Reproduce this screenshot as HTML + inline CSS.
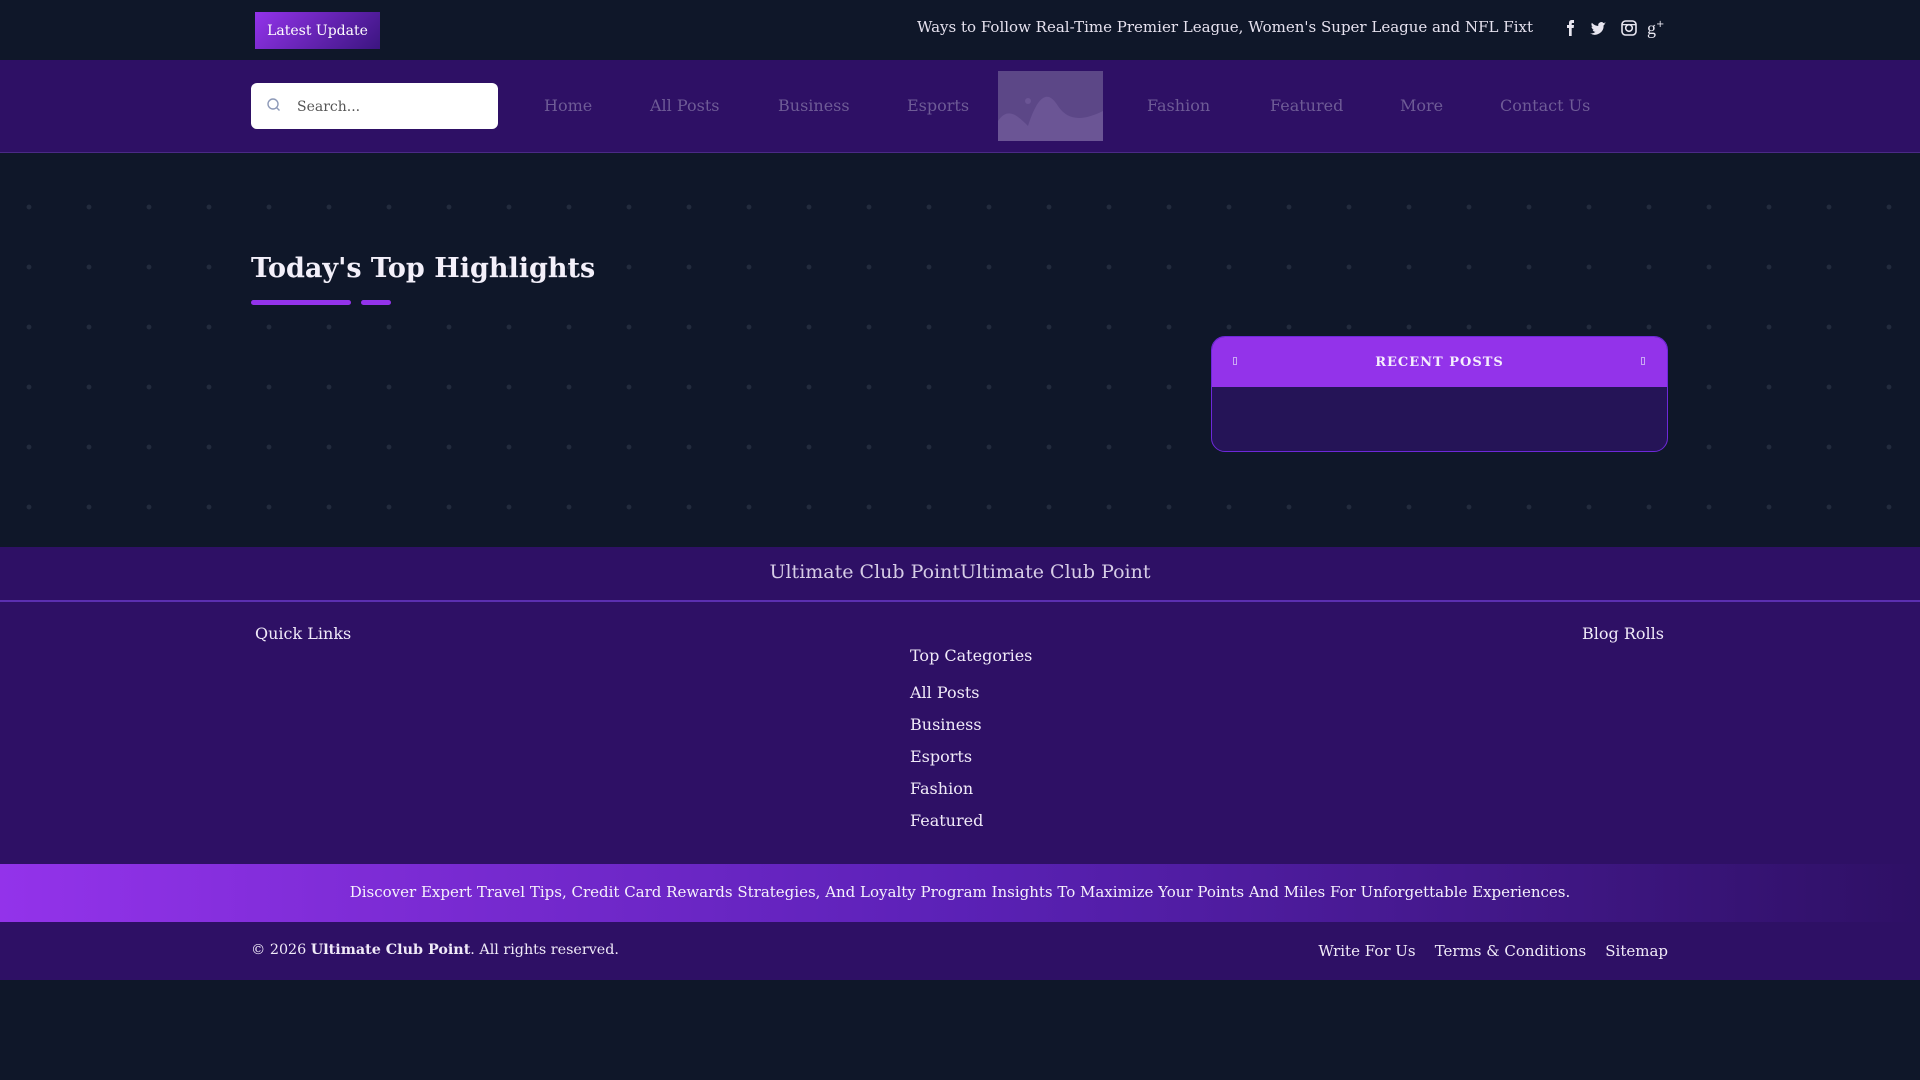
<!DOCTYPE html>
<html><head><meta charset="utf-8"><style>
*{margin:0;padding:0;box-sizing:border-box}
body{width:1920px;height:1080px;background:#0f1729;font-family:"DejaVu Serif","Liberation Serif",serif;color:#fff;position:relative;overflow:hidden}
.abs{position:absolute;white-space:nowrap}
.top{position:absolute;left:0;top:0;width:1920px;height:60px;background:#0f1729}
.btn{left:255px;top:12px;width:125px;height:37px;background:linear-gradient(135deg,#9333ea,#3b1580);font-size:14px;line-height:38px;text-align:center}
.nav{position:absolute;left:0;top:60px;width:1920px;height:93px;background:#2e1065;border-bottom:1px solid #4a2a85}
.search{left:251px;top:83px;width:247px;height:46px;background:#fff;border-radius:6px;color:#555;font-size:14px;line-height:48px;padding-left:46px}
.nv{top:96px;font-size:16px;color:#6e5b96}
.main{position:absolute;left:0;top:153px;width:1920px;height:394px;background-color:#0f1729;background-image:radial-gradient(circle,#222b3d 2.2px,transparent 2.6px);background-size:60px 60px;background-position:-1px 24px}
.foot{position:absolute;left:0;top:547px;width:1920px;height:433px;background:#2e1065}
.fl{font-size:16px;color:#f0eaf8}
</style></head><body>
<div class="top"></div>
<div class="abs btn">Latest Update</div>
<div class="abs" style="left:917px;top:18px;font-size:15px;color:#e5e1ee">Ways to Follow Real-Time Premier League, Women's Super League and NFL Fixt</div>
<svg class="abs" style="left:1560px;top:16px" width="110" height="24" viewBox="0 0 110 24" fill="#e8e6f0">
<path d="M9 20v-8h-2v-3h2V7c0-2 1-3 3-3h2v3h-1.5c-.6 0-.8.3-.8.9V9h2.3l-.3 3h-2v8z"/>
<path d="M46 7.5c-.6.3-1.2.4-1.8.5.7-.4 1.1-1 1.4-1.7-.6.4-1.3.6-2 .8a3.1 3.1 0 0 0-5.3 2.8c-2.6-.1-4.900-1.4-6.4-3.200-.9 1.500-.4 3.300 1 4.200-.5 0-1-.2-1.400-.4 0 1.500 1.100 2.800 2.500 3.100-.5.100-1 .2-1.400.1.4 1.300 1.600 2.200 2.900 2.200A6.300 6.300 0 0 1 30 17.300 8.800 8.800 0 0 0 43.600 9.400c.6-.5 1.100-1.100 1.500-1.700z"/>
<rect x="62" y="5" width="14" height="14" rx="3.5" fill="none" stroke="#e8e6f0" stroke-width="1.6"/><circle cx="69" cy="12" r="3.3" fill="none" stroke="#e8e6f0" stroke-width="1.6"/><rect x="62" y="8" width="14" height="1.3"/>
<text x="87" y="18" font-size="18" font-family="Liberation Serif">g</text><text x="96" y="11" font-size="10" font-family="DejaVu Sans">+</text>
</svg>
<div class="nav"></div>
<div class="abs search"><svg style="position:absolute;left:15px;top:14px" width="16" height="16" viewBox="0 0 16 16"><circle cx="7" cy="7" r="5" fill="none" stroke="#8e9ab8" stroke-width="1.4"/><path d="M10.5 10.5l3 3" stroke="#8e9ab8" stroke-width="1.4"/></svg>Search...</div>
<div class="abs nv" style="left:544px">Home</div>
<div class="abs nv" style="left:650px">All Posts</div>
<div class="abs nv" style="left:778px">Business</div>
<div class="abs nv" style="left:907px">Esports</div>
<svg class="abs" style="left:998px;top:71px" width="105" height="70" viewBox="0 0 105 70"><rect width="105" height="70" fill="#5c4787"/><path d="M0 50c10-15 20-5 30 5c8-25 18-40 30-20c10 15 25 15 45 5v30H0z" fill="#6b5595"/><circle cx="30" cy="30" r="3" fill="#6b5595"/></svg>
<div class="abs nv" style="left:1147px">Fashion</div>
<div class="abs nv" style="left:1270px">Featured</div>
<div class="abs nv" style="left:1400px">More</div>
<div class="abs nv" style="left:1500px">Contact Us</div>
<div class="main"></div>
<div class="abs" style="left:251px;top:253px;font-size:27px;font-weight:bold;color:#f3f0fa">Today's Top Highlights</div>
<div class="abs" style="left:251px;top:300px;width:100px;height:5px;border-radius:3px;background:#9333ea"></div>
<div class="abs" style="left:361px;top:300px;width:30px;height:5px;border-radius:3px;background:#9333ea"></div>
<div class="abs" style="left:1211px;top:336px;width:457px;height:116px;border:1px solid #6d28d9;border-radius:14px;background:#251457;overflow:hidden">
<div style="height:50px;background:#9333ea;text-align:center;font-size:13px;font-weight:bold;letter-spacing:1px;line-height:52px;color:#f5eefd;position:relative">RECENT POSTS<span style="position:absolute;left:21px;top:20px;width:4px;height:8px;border:1px solid #c9a6f3"></span><span style="position:absolute;right:22px;top:20px;width:4px;height:8px;border:1px solid #c9a6f3"></span></div>
</div>
<div class="foot"></div>
<div class="abs" style="left:0;top:600px;width:1920px;height:2px;background:#5b2fb0"></div>
<div class="abs" style="left:0;top:561px;width:1920px;text-align:center;font-size:19px;color:#d6cde6">Ultimate Club PointUltimate Club Point</div>
<div class="abs fl" style="left:255px;top:624px">Quick Links</div>
<div class="abs fl" style="left:910px;top:646px">Top Categories</div>
<div class="abs fl" style="right:256px;top:624px">Blog Rolls</div>
<div class="abs fl" style="left:910px;top:683px">All Posts</div>
<div class="abs fl" style="left:910px;top:715px">Business</div>
<div class="abs fl" style="left:910px;top:747px">Esports</div>
<div class="abs fl" style="left:910px;top:779px">Fashion</div>
<div class="abs fl" style="left:910px;top:811px">Featured</div>
<div class="abs" style="left:0;top:864px;width:1920px;height:58px;background:linear-gradient(90deg,#9333ea,#5b21b6 50%,#2e1065)"></div>
<div class="abs" style="left:0;top:883px;width:1920px;text-align:center;font-size:15px;color:#f5f0fc">Discover Expert Travel Tips, Credit Card Rewards Strategies, And Loyalty Program Insights To Maximize Your Points And Miles For Unforgettable Experiences.</div>
<div class="abs" style="left:251px;top:942px;font-size:14.3px;color:#f0eaf8">© 2026 <b>Ultimate Club Point</b>. All rights reserved.</div>
<div class="abs" style="right:252px;top:942px;font-size:15px;color:#f0eaf8">Write For Us&nbsp;&nbsp;&nbsp;&nbsp;Terms &amp; Conditions&nbsp;&nbsp;&nbsp;&nbsp;Sitemap</div>
</body></html>
